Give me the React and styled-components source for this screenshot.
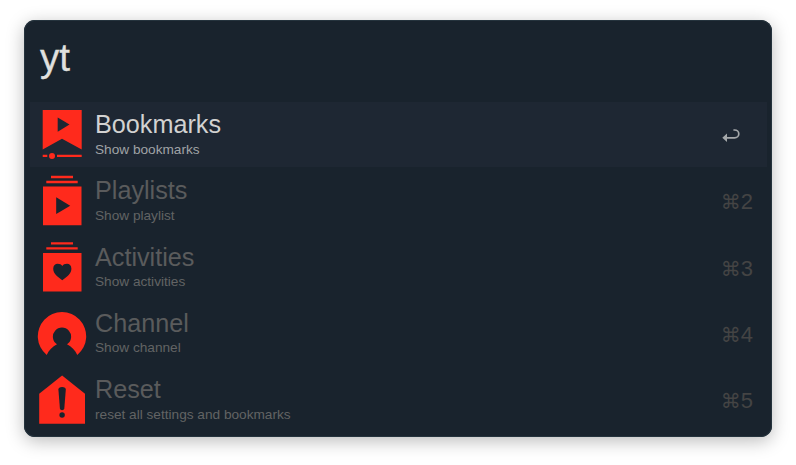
import React from "react";
import styled, { createGlobalStyle } from "styled-components";

const GlobalStyle = createGlobalStyle`
  * { box-sizing: border-box; }
  body { margin: 0; background: #fff; }
`;

const Page = styled.main`
  height: 465px;
  padding: 20px 24px 28px;
  overflow: hidden;
  font-family: "Liberation Sans", Arial, sans-serif;
`;

const Launcher = styled.section`
  width: 748px;
  height: 417px;
  padding: 0 5px 0 6px;
  border-radius: 11px;
  background: #19232d;
  box-shadow: inset 0 0 0 1px #25333d, 0 4px 18px rgba(0, 0, 0, 0.27);
`;

const Query = styled.header`
  height: 82px;
  padding: 16px 10px 0;
  font-size: 38.5px;
  line-height: 44px;
  color: #e0e0df;
  -webkit-text-stroke: 0.3px #e0e0df;
`;

const Results = styled.ul`
  display: grid;
  grid-auto-rows: 66.25px;
  margin: 0;
  padding: 0;
  list-style: none;
`;

const Row = styled.li`
  display: grid;
  grid-template-columns: 56px 1fr auto;
  height: 65px;
  padding: 0 14px 0 4px;
  background: ${(p) => (p.$active ? "#1e2733" : "transparent")};
`;

const Icon = styled.svg`
  display: block;
  width: 56px;
  height: 65px;
  fill: #ff2a1c;
`;

const Labels = styled.div`
  padding: 7px 0 0 5px;
`;

const Title = styled.div`
  font-size: 25.2px;
  line-height: 30px;
  color: ${(p) => (p.$active ? "#d2d2d1" : "#5a5b5c")};
`;

const Subtitle = styled.div`
  margin-top: 1.6px;
  font-size: 13.65px;
  line-height: 17px;
  color: ${(p) => (p.$active ? "#a0a3a6" : "#626364")};
`;

const Shortcut = styled.div`
  display: flex;
  align-items: center;
  padding-top: 3px;
  font-size: 22px;
  color: #444444;
`;

const CommandKey = styled.span`
  font-family: "DejaVu Sans", sans-serif;
  font-size: 20px;
`;

const ReturnIcon = styled.svg`
  width: 18px;
  height: 16px;
  margin: 0 13px 0 0;
  fill: none;
  stroke: #a5a8aa;
  stroke-width: 1.7;
`;

const DARK = "#19232d";

const icons = {
  bookmarks: (
    <>
      <path d="M8.7 8H47.7V47.5L28 36.7L8.7 47.5Z" />
      <path d="M23.7 15.5L35.5 22.6L23.7 29.7Z" fill="#1e2733" />
      <path d="M8.7 52.8H13.3V55H8.7ZM23 52.8H47.7V55H23Z" />
      <circle cx="18" cy="53.9" r="3" />
    </>
  ),
  playlists: (
    <>
      <path d="M17 7.8H39V10.2H17ZM12.3 12.8H43.7V15.2H12.3ZM9 18.6H47.5V57.2H9Z" />
      <path d="M22.2 29.3L36.2 37.7L22.2 46Z" fill={DARK} />
    </>
  ),
  activities: (
    <g transform="translate(0 -0.6)">
      <path d="M17 7.8H39V10.2H17ZM12.3 12.8H43.7V15.2H12.3ZM9 18.6H47.5V57.2H9Z" />
      <path
        d="M28.3 45.8C24 42.5 19.2 39.5 19.2 34.4C19.2 31 21.3 29.4 23.7 29.4C25.8 29.4 27.4 30.2 28.3 31.6C29.2 30.2 30.9 29.4 33 29.4C35.4 29.4 37.4 31 37.4 34.4C37.4 39.5 32.6 42.5 28.3 45.8Z"
        fill={DARK}
      />
    </g>
  ),
  channel: (
    <path
      d="M12.7 54A24.2 24.2 0 1 1 43.3 54C41.1 49.2 37.6 45.6 33 43.3A9.1 9.1 0 1 0 23 43.3C18.4 45.6 14.9 49.2 12.7 54Z"
    />
  ),
  reset: (
    <>
      <path d="M28.1 8.6L51 26.8V56.8H5.2V26.8Z" />
      <path
        d="M24.4 22.6Q24.4 19.9 28.1 19.9T31.8 22.6L30.3 41.5Q30 43.2 28.1 43.2T25.9 41.5Z"
        fill={DARK}
      />
      <circle cx="28.1" cy="48" r="2.7" fill={DARK} />
    </>
  ),
};

const items = [
  { icon: "bookmarks", title: "Bookmarks", subtitle: "Show bookmarks", active: true },
  { icon: "playlists", title: "Playlists", subtitle: "Show playlist", number: 2 },
  { icon: "activities", title: "Activities", subtitle: "Show activities", number: 3 },
  { icon: "channel", title: "Channel", subtitle: "Show channel", number: 4 },
  { icon: "reset", title: "Reset", subtitle: "reset all settings and bookmarks", number: 5 },
];

export default function App() {
  return (
    <Page>
      <GlobalStyle />
      <Launcher>
        <Query>yt</Query>
        <Results>
          {items.map((item) => (
            <Row key={item.title} $active={item.active}>
              <Icon viewBox="0 0 56 65">{icons[item.icon]}</Icon>
              <Labels>
                <Title $active={item.active}>{item.title}</Title>
                <Subtitle $active={item.active}>{item.subtitle}</Subtitle>
              </Labels>
              <Shortcut>
                {item.active ? (
                  <ReturnIcon viewBox="0 0 18 16">
                    <path d="M4 9.8H12.6A4.2 3.9 0 0 0 12.6 2H11.4" />
                    <path d="M0.3 9.8L5 5.5V14.1Z" fill="#a5a8aa" stroke="none" />
                  </ReturnIcon>
                ) : (
                  <>
                    <CommandKey>⌘</CommandKey>
                    {item.number}
                  </>
                )}
              </Shortcut>
            </Row>
          ))}
        </Results>
      </Launcher>
    </Page>
  );
}
